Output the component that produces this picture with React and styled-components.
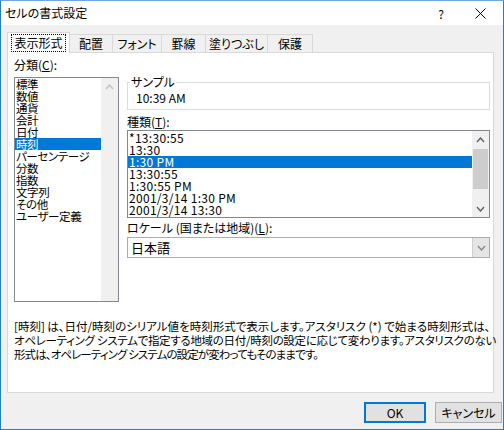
import React from 'react';
import styled, { createGlobalStyle } from 'styled-components';

const GlobalStyle = createGlobalStyle`
  html, body {
    margin: 0;
    padding: 0;
    background: #ffffff;
  }
  * {
    box-sizing: border-box;
  }
`;

const Window = styled.div`
  width: 504px;
  height: 430px;
  border: 1px solid #1c7fd2;
  border-top-color: #6fa8de;
  display: flex;
  flex-direction: column;
  font-family: "Noto Sans CJK JP", "Noto Sans", sans-serif;
  font-size: 12px;
  font-feature-settings: "palt";
  color: #000;
  background: #f0f0f0;
`;

const TitleBar = styled.div`
  height: 24px;
  background: #ffffff;
  display: flex;
  align-items: center;
  padding-left: 4px;
`;

const TitleText = styled.div`
  flex: 1;
  font-size: 12px;
  line-height: 14px;
`;

const TitleButton = styled.div`
  width: ${(p) => p.w}px;
  height: 24px;
  display: flex;
  align-items: center;
  justify-content: center;
  font-size: 12px;
`;

const Body = styled.div`
  flex: 1;
  display: flex;
  flex-direction: column;
  padding: 7px 0 0 6px;
`;

const TabRow = styled.div`
  display: flex;
  align-items: flex-end;
  height: 20px;
`;

const Tab = styled.div`
  width: ${(p) => p.w}px;
  height: ${(p) => (p.active ? 21 : 18)}px;
  margin-bottom: ${(p) => (p.active ? -1 : 0)}px;
  margin-left: ${(p) => (p.first ? 0 : -1)}px;
  background: ${(p) => (p.active ? '#ffffff' : '#f0f0f0')};
  border: 1px solid #d9d9d9;
  border-bottom: none;
  display: flex;
  align-items: center;
  justify-content: center;
  position: relative;
  z-index: ${(p) => (p.active ? 2 : 1)};
  line-height: 14px;
`;

const FocusLabel = styled.span`
  outline: 1px dotted #000;
  outline-offset: 1px;
  padding: 0 1px;
`;

const Panel = styled.div`
  width: 487px;
  height: 341px;
  background: #ffffff;
  border: 1px solid #d9d9d9;
  padding: 5px 0 0 6px;
  display: flex;
  flex-direction: column;
  position: relative;
  z-index: 1;
`;

const TopArea = styled.div`
  display: flex;
  gap: 8px;
`;

const LeftColumn = styled.div`
  width: 105px;
  display: flex;
  flex-direction: column;
`;

const RightColumn = styled.div`
  width: 363px;
  display: flex;
  flex-direction: column;
  padding-top: 18px;
`;

const Label = styled.div`
  line-height: 14px;
  margin: ${(p) => p.m || '0'};
  white-space: nowrap;
`;

const ListBox = styled.div`
  height: ${(p) => p.h}px;
  border: 1px solid #828790;
  display: flex;
  background: #ffffff;
`;

const ListItems = styled.div`
  flex: 1;
  display: flex;
  flex-direction: column;
  padding-top: ${(p) => p.pt || 0}px;
  font-size: ${(p) => p.fs || 12}px;
  letter-spacing: ${(p) => p.ls || 0}px;
`;

const ListItem = styled.div`
  height: 12px;
  line-height: 12px;
  padding-left: 1px;
  white-space: nowrap;
  background: ${(p) => (p.selected ? '#0078d7' : 'transparent')};
  color: ${(p) => (p.selected ? '#ffffff' : '#000000')};
`;

const ScrollBar = styled.div`
  width: 17px;
  background: #f0f0f0;
  display: flex;
  flex-direction: column;
`;

const ScrollArrow = styled.div`
  height: 17px;
  display: flex;
  align-items: center;
  justify-content: center;
`;

const ScrollTrack = styled.div`
  flex: 1;
  display: flex;
  flex-direction: column;
  padding: 1px 1px 0;
`;

const ScrollThumb = styled.div`
  height: 40px;
  background: #cdcdcd;
`;

const GroupBox = styled.fieldset`
  margin: 0;
  border: 1px solid #dcdcdc;
  padding: 3px 8px 4px;
  min-width: 0;
`;

const GroupLegend = styled.legend`
  padding: 0 1px;
  margin-left: -6px;
  line-height: 12px;
`;

const SampleValue = styled.div`
  line-height: 14px;
`;

const Combo = styled.div`
  height: 21px;
  border: 1px solid #adadad;
  display: flex;
  background: #ffffff;
`;

const ComboValue = styled.div`
  flex: 1;
  display: flex;
  align-items: center;
  padding-left: 3px;
  font-size: 13px;
`;

const ComboButton = styled.div`
  width: 17px;
  background: #e5e5e5;
  border-left: 1px solid #cfcfcf;
  display: flex;
  align-items: center;
  justify-content: center;
`;

const Description = styled.div`
  margin-top: 17px;
  display: flex;
  flex-direction: column;
  font-size: 11.5px;
`;

const DescLine = styled.div`
  line-height: 14px;
  white-space: nowrap;
  letter-spacing: ${(p) => p.ls}px;
`;

const Footer = styled.div`
  display: flex;
  justify-content: flex-end;
  gap: 9px;
  margin-top: 9px;
  padding-right: 1px;
`;

const Button = styled.div`
  width: ${(p) => p.w}px;
  height: 21px;
  background: #e1e1e1;
  border: ${(p) => (p.primary ? '2px solid #0078d7' : '1px solid #adadad')};
  display: flex;
  align-items: center;
  justify-content: center;
  line-height: 14px;
`;

const Chevron = ({ dir = 'up', color = '#606060', w = 7 }) => (
  <svg width={w + 2} height="6" viewBox={`0 0 ${w + 2} 6`}>
    <polyline
      points={dir === 'up' ? `1,5 ${(w + 2) / 2},1 ${w + 1},5` : `1,1 ${(w + 2) / 2},5 ${w + 1},1`}
      fill="none"
      stroke={color}
      strokeWidth="1.4"
    />
  </svg>
);

const categories = ['標準', '数値', '通貨', '会計', '日付', '時刻', 'パーセンテージ', '分数', '指数', '文字列', 'その他', 'ユーザー定義'];
const types = ['*13:30:55', '13:30', '1:30 PM', '13:30:55', '1:30:55 PM', '2001/3/14 1:30 PM', '2001/3/14 13:30'];
const tabs = [
  { label: '表示形式', w: 63 },
  { label: '配置', w: 44 },
  { label: 'フォント', w: 50 },
  { label: '罫線', w: 45 },
  { label: '塗りつぶし', w: 63 },
  { label: '保護', w: 46 },
];

export default function App() {
  return (
    <>
      <GlobalStyle />
      <Window>
        <TitleBar>
          <TitleText>セルの書式設定</TitleText>
          <TitleButton w={32}>?</TitleButton>
          <TitleButton w={46}>
            <svg width="11" height="11" viewBox="0 0 11 11">
              <path d="M0.5 0.5 L10.5 10.5 M10.5 0.5 L0.5 10.5" stroke="#000" strokeWidth="1" />
            </svg>
          </TitleButton>
        </TitleBar>
        <Body>
          <TabRow>
            {tabs.map((t, i) => (
              <Tab key={t.label} w={t.w} active={i === 0} first={i === 0}>
                {i === 0 ? <FocusLabel>{t.label}</FocusLabel> : t.label}
              </Tab>
            ))}
          </TabRow>
          <Panel>
            <TopArea>
              <LeftColumn>
                <Label m="0 0 5px">分類(<u>C</u>):</Label>
                <ListBox h={225}>
                  <ListItems fs={11.5} ls={-0.4}>
                    {categories.map((c) => (
                      <ListItem key={c} selected={c === '時刻'}>{c}</ListItem>
                    ))}
                  </ListItems>
                  <ScrollBar>
                    <ScrollArrow>
                      <Chevron dir="up" color="#c0c0c0" />
                    </ScrollArrow>
                  </ScrollBar>
                </ListBox>
              </LeftColumn>
              <RightColumn>
                <GroupBox>
                  <GroupLegend>サンプル</GroupLegend>
                  <SampleValue>10:39 AM</SampleValue>
                </GroupBox>
                <Label m="5px 0 1px">種類(<u>T</u>):</Label>
                <ListBox h={88}>
                  <ListItems pt={1} ls={0.3}>
                    {types.map((t, i) => (
                      <ListItem key={i} selected={i === 2}>{t}</ListItem>
                    ))}
                  </ListItems>
                  <ScrollBar>
                    <ScrollArrow>
                      <Chevron dir="up" />
                    </ScrollArrow>
                    <ScrollTrack>
                      <ScrollThumb />
                    </ScrollTrack>
                    <ScrollArrow>
                      <Chevron dir="down" />
                    </ScrollArrow>
                  </ScrollBar>
                </ListBox>
                <Label m="3px 0 2px">ロケール (国または地域)(<u>L</u>):</Label>
                <Combo>
                  <ComboValue>日本語</ComboValue>
                  <ComboButton>
                    <Chevron dir="down" color="#8a8a8a" />
                  </ComboButton>
                </Combo>
              </RightColumn>
            </TopArea>
            <Description>
              <DescLine ls={0}>[時刻] は、日付/時刻のシリアル値を時刻形式で表示します。アスタリスク (*) で始まる時刻形式は、</DescLine>
              <DescLine ls={-0.3}>オペレーティング システムで指定する地域の日付/時刻の設定に応じて変わります。アスタリスクのない</DescLine>
              <DescLine ls={-0.9}>形式は、オペレーティング システムの設定が変わってもそのままです。</DescLine>
            </Description>
          </Panel>
          <Footer>
            <Button w={62} primary>OK</Button>
            <Button w={67}>キャンセル</Button>
          </Footer>
        </Body>
      </Window>
    </>
  );
}
